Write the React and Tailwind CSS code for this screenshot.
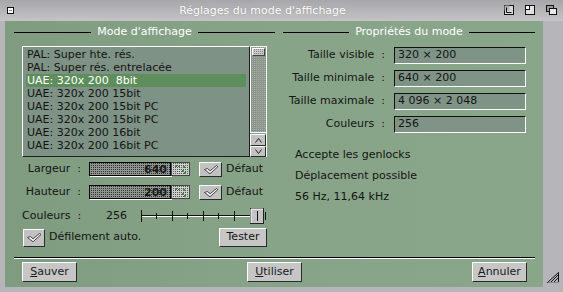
import React from 'react';

const listItems = [
  'PAL: Super hte. rés.',
  'PAL: Super rés. entrelacée',
  'UAE: 320x 200  8bit',
  'UAE: 320x 200 15bit',
  'UAE: 320x 200 15bit PC',
  'UAE: 320x 200 15bit PC',
  'UAE: 320x 200 16bit',
  'UAE: 320x 200 16bit PC',
];

const props = [
  ['Taille visible', '320 × 200'],
  ['Taille minimale', '640 × 200'],
  ['Taille maximale', '4 096 × 2 048'],
  ['Couleurs', '256'],
];

function Check() {
  return (
    <svg width="16" height="11" viewBox="0 0 16 11">
      <path d="M1.5 5.5 L4.5 4.5 L7 6.8 L13.5 1.5 L15 2.5 L7 9.8 Z" fill="#ececec" stroke="#3a3a3a" strokeWidth="0.9" strokeLinejoin="round" />
    </svg>
  );
}

function CheckButton({ className = '' }) {
  return (
    <div className={`flex items-center justify-center bg-[#c2c2c2] border border-t-white border-l-white border-b-[#2a2a2a] border-r-[#2a2a2a] ${className}`}>
      <Check />
    </div>
  );
}

function Header({ title }) {
  return (
    <div className="h-[12px] flex items-center">
      <div className="flex-1 h-px bg-black" />
      <span className="px-[6px] text-white leading-[12px]">{title}</span>
      <div className="flex-1 h-px bg-black" />
    </div>
  );
}

function NumField({ value }) {
  return (
    <div className="flex h-[14px]">
      <div className="w-[82px] h-full border border-black shadow-[1px_1px_0_#fff] bg-[#8e968f] bg-[conic-gradient(#2e2e2e_0_25%,transparent_0)] bg-[length:2px_2px] flex items-center justify-end pr-[3px] font-bold text-[#1a1a1a] leading-none">
        {value}
      </div>
      <div className="w-[19px] h-full border border-[#444] bg-[#cfcfcf] bg-[conic-gradient(#555_0_25%,transparent_0)] bg-[length:2px_2px] relative">
        <svg width="17" height="12" className="absolute left-0 top-0">
          <rect x="3" y="2" width="2" height="2" fill="#3d8a3d" />
          <rect x="6" y="3" width="2" height="1" fill="#3d8a3d" />
          <rect x="11" y="3" width="2" height="2" fill="#3d8a3d" />
          <rect x="10" y="7" width="2" height="2" fill="#3d8a3d" />
          <rect x="12" y="9" width="2" height="2" fill="#3d8a3d" />
        </svg>
      </div>
    </div>
  );
}

function Slider() {
  const ticks = [16, 32, 47, 63, 78, 94];
  return (
    <svg width="127" height="16" viewBox="0 0 127 16">
      <line x1="1" y1="7.5" x2="112" y2="7.5" stroke="#111" />
      <line x1="1" y1="8.5" x2="112" y2="8.5" stroke="#fff" />
      <line x1="1.5" y1="2" x2="1.5" y2="14" stroke="#111" />
      {ticks.map((t, i) => (
        <line key={t} x1={t + 0.5} y1={i % 2 ? 3 : 5} x2={t + 0.5} y2={i % 2 ? 13 : 11} stroke="#111" />
      ))}
      <rect x="110.5" y="0.5" width="13" height="15" fill="#c4c4c4" stroke="#222" />
      <line x1="111" y1="1" x2="123" y2="1" stroke="#fff" />
      <line x1="111" y1="1" x2="111" y2="15" stroke="#fff" />
      <line x1="117.5" y1="3" x2="117.5" y2="13" stroke="#111" />
      <line x1="125.5" y1="4" x2="125.5" y2="12" stroke="#111" />
    </svg>
  );
}

function Btn({ first, rest }) {
  return (
    <div className="h-[20px] w-[55px] flex items-center justify-center bg-[#c6c6c6] border border-t-white border-l-white border-b-[#2a2a2a] border-r-[#2a2a2a] text-[#1a1a1a]">
      <span><span className="underline">{first}</span>{rest}</span>
    </div>
  );
}

export default function App() {
  return (
    <div className="w-[563px] h-[292px] bg-[#b6b6ba] flex flex-col overflow-hidden font-['DejaVu_Sans',sans-serif] text-[11px] text-[#141414]">
      {/* title bar */}
      <div className="h-[21px] flex items-center bg-gradient-to-b from-[#a7a7ab] to-[#c4c4c6]">
        <div className="w-[21px] flex justify-center">
          <svg width="7" height="7" viewBox="0 0 7 7">
            <rect x="0.5" y="0.5" width="6" height="6" fill="#fff" stroke="#111" />
            <line x1="2" y1="3.5" x2="5" y2="3.5" stroke="#888" />
          </svg>
        </div>
        <div className="flex-1 text-center text-white text-[11px] leading-none [text-shadow:0_0_1px_#888]">Réglages du mode d'affichage</div>
        <div className="flex items-center gap-[11px] pr-[6px] pt-[1px] self-start mt-[4px]">
          <svg width="10" height="10" viewBox="0 0 10 10">
            <rect x="0.5" y="0.5" width="9" height="9" fill="#d8d8d8" stroke="#111" />
            <rect x="0.5" y="0.5" width="5" height="5" fill="#b0b0b0" stroke="none" />
            <path d="M2.5 2.5 V7.5 H7.5" fill="none" stroke="#111" />
          </svg>
          <svg width="10" height="10" viewBox="0 0 10 10">
            <rect x="0.5" y="0.5" width="9" height="9" fill="#e2e2e2" stroke="#111" />
            <rect x="0.5" y="0.5" width="4" height="4" fill="#fff" stroke="#111" />
          </svg>
          <svg width="11" height="10" viewBox="0 0 11 10">
            <rect x="0.5" y="0.5" width="7" height="6" fill="#9a9a9a" stroke="#111" />
            <rect x="3.5" y="3.5" width="7" height="6" fill="#e8e8e8" stroke="#111" />
          </svg>
        </div>
      </div>

      {/* body */}
      <div className="flex h-[266px]">
        <div className="w-[5px]" />
        <div className="w-[538px] h-full bg-gradient-to-r from-[#7f9c80] via-[#88a488] to-[#8aa68a] flex flex-col pt-[5px] pl-[9px] pr-[8px]">
          <div className="flex gap-[8px] h-[221px]">
            {/* left column */}
            <div className="w-[261px] flex flex-col">
              <Header title="Mode d'affichage" />
              <div className="mt-[8px] ml-[8px] flex h-[111px]">
                <div className="w-[228px] h-full bg-[#7e9285] border border-t-white border-l-white border-b-[#1e1e1e] border-r-[#1e1e1e] overflow-hidden px-[3px] pt-[1px]">
                  {listItems.map((it, i) => (
                    <div key={i} className={`h-[13px] leading-[13px] pl-[1px] whitespace-pre ${i === 2 ? 'bg-[#5e8e5b] text-white' : ''}`}>{it}</div>
                  ))}
                </div>
                <div className="w-[17px] h-full flex flex-col border-r border-white">
                  <div className="flex-1 border border-white border-r-0 bg-[#8a958c] bg-[conic-gradient(#a9b0aa_0_25%,transparent_0)] bg-[length:2px_2px] pt-[1px] px-[1px]">
                    <div className="h-[8px] bg-[#c8c8c8] bg-[conic-gradient(#888_0_25%,transparent_0)] bg-[length:2px_2px] border border-t-white border-l-white border-b-[#444] border-r-[#444]" />
                  </div>
                  <div className="h-[12px] mt-[1px] bg-[#c2c2c2] border border-t-white border-l-white border-b-[#2a2a2a] border-r-[#2a2a2a] flex items-center justify-center">
                    <svg width="7" height="5" viewBox="0 0 7 5"><path d="M0.5 4.5 L3.5 0.5 L6.5 4.5" fill="none" stroke="#222" /></svg>
                  </div>
                  <div className="h-[11px] bg-[#c2c2c2] border border-t-white border-l-white border-b-[#2a2a2a] border-r-[#2a2a2a] flex items-center justify-center">
                    <svg width="7" height="5" viewBox="0 0 7 5"><path d="M0.5 0.5 L3.5 4.5 L6.5 0.5" fill="none" stroke="#222" /></svg>
                  </div>
                </div>
              </div>

              <div className="mt-[5px] h-[14px] flex items-center">
                <div className="ml-[8px] w-[59px] text-right">Largeur&nbsp;&nbsp;:</div>
                <div className="ml-[8px]"><NumField value="640" /></div>
                <CheckButton className="ml-[9px] w-[23px] h-[15px]" />
                <span className="ml-[4px]">Défaut</span>
              </div>
              <div className="mt-[9px] h-[14px] flex items-center">
                <div className="ml-[8px] w-[59px] text-right">Hauteur&nbsp;&nbsp;:</div>
                <div className="ml-[8px]"><NumField value="200" /></div>
                <CheckButton className="ml-[9px] w-[23px] h-[15px]" />
                <span className="ml-[4px]">Défaut</span>
              </div>
              <div className="mt-[9px] h-[16px] flex items-center">
                <div className="ml-[8px] w-[59px] text-right whitespace-nowrap">Couleurs&nbsp;&nbsp;:</div>
                <div className="w-[46px] text-right">256</div>
                <div className="ml-[13px] flex"><Slider /></div>
              </div>
              <div className="mt-[4px] h-[19px] flex items-center">
                <CheckButton className="ml-[9px] w-[22px] h-[18px]" />
                <span className="ml-[4px]">Défilement auto.</span>
                <div className="ml-auto mr-[8px] w-[48px] h-[19px] flex items-center justify-center bg-[#c6c6c6] border border-t-white border-l-white border-b-[#2a2a2a] border-r-[#2a2a2a]">Tester</div>
              </div>
            </div>

            {/* right column */}
            <div className="w-[252px] flex flex-col">
              <Header title="Propriétés du mode" />
              <div className="mt-[9px] flex flex-col gap-[6px]">
                {props.map(([k, v]) => (
                  <div key={k} className="h-[17px] flex items-center">
                    <div className="w-[102px] text-right whitespace-nowrap">{k}&nbsp;&nbsp;:</div>
                    <div className="ml-[9px] w-[132px] h-full bg-[#7f9386] border border-t-[#111] border-l-[#111] border-b-white border-r-white pl-[3px] flex items-center">{v}</div>
                  </div>
                ))}
              </div>
              <div className="mt-[11px] pl-[12px] flex flex-col">
                <div className="leading-[21px]">Accepte les genlocks</div>
                <div className="leading-[21px]">Déplacement possible</div>
                <div className="leading-[21px]">56 Hz, 11,64 kHz</div>
              </div>
            </div>
          </div>

          <div className="mt-[10px] h-[2px] border-t border-black border-b border-b-white" />
          <div className="mt-[3px] px-[8px] flex justify-between">
            <Btn first="S" rest="auver" />
            <Btn first="U" rest="tiliser" />
            <Btn first="A" rest="nnuler" />
          </div>
        </div>
        <div className="flex-1 flex items-end justify-center pb-[4px]">
          <svg width="12" height="11" viewBox="0 0 12 11">
            <path d="M11.5 0.5 L11.5 10.5 L0.5 10.5 Z" fill="none" stroke="#111" />
            <line x1="4" y1="10" x2="11" y2="3" stroke="#111" />
            <line x1="7" y1="10" x2="11" y2="6" stroke="#111" />
            <line x1="1" y1="11" x2="12" y2="11" stroke="#fff" />
          </svg>
        </div>
      </div>
    </div>
  );
}
